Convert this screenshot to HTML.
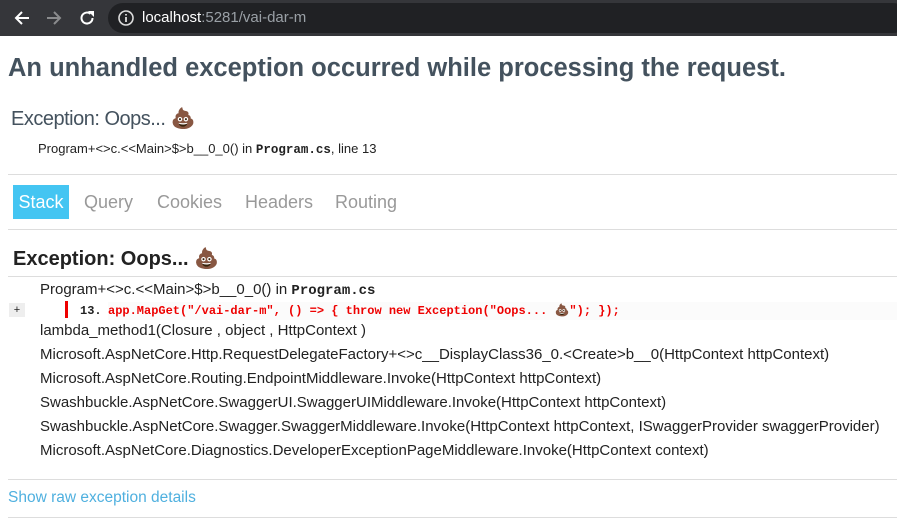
<!DOCTYPE html>
<html><head><meta charset="utf-8"><style>
*{box-sizing:border-box;margin:0;padding:0}
body{width:897px;height:525px;overflow:hidden;background:#fff;font-family:"Segoe UI","Liberation Sans","Noto Sans CJK JP",sans-serif;color:#222}
.bar{height:36px;background:#35363a;position:relative}
.url{position:absolute;left:108px;top:3px;width:800px;height:30px;border-radius:15px;background:#202124;color:#9aa0a6;font-size:15px;line-height:30px;padding-left:34px}
.url b{color:#fff;font-weight:normal}
.bar svg{position:absolute}
.abs{position:absolute;white-space:nowrap}
h1{position:absolute;left:8px;top:54px;font-size:25.5px;font-weight:bold;color:#44525e;white-space:nowrap}
.exc{left:11px;top:106px;font-size:20px;color:#44525e;letter-spacing:-0.5px}
.loc{left:38px;top:141px;font-size:13px;color:#222}
code,.mono{font-family:"Liberation Mono","DejaVu Sans Mono",monospace}
.hr{position:absolute;left:8px;right:0;height:1px;background:#ddd}
.tab{position:absolute;top:185px;height:34px;line-height:34px;font-size:18px;color:#999}
.h2{left:13px;top:246px;font-size:20px;font-weight:bold;color:#222}
.fr{left:40px;font-size:15px;color:#222}
.plus{position:absolute;left:9px;top:303px;width:16px;height:14px;background:#eee;font-size:11px;line-height:14px;text-align:center;color:#222}
.code{position:absolute;left:108px;top:302px;width:789px;height:18px;background:#fbfbfb;font-size:12px;font-weight:bold;color:#e00;line-height:18px;padding-left:0}
.redbar{position:absolute;left:65px;top:301px;width:3px;height:17px;background:#e00}
.ln{left:80px;top:302px;font-size:12px;font-weight:bold;line-height:18px;color:#222}
.raw{left:8px;top:489px;font-size:15.5px;color:#4fb0df}
</style></head><body>
<div class="bar">
<svg style="left:13px;top:9px" width="18" height="18" viewBox="0 0 18 18"><path d="M16 9H3M9 3L3 9l6 6" stroke="#fff" stroke-width="2" fill="none"/></svg>
<svg style="left:45px;top:9px" width="18" height="18" viewBox="0 0 18 18"><path d="M2 9h13M9 3l6 6-6 6" stroke="#8a8b8d" stroke-width="2" fill="none"/></svg>
<svg style="left:78px;top:9px" width="18" height="18" viewBox="0 0 18 18"><path d="M14.5 9A5.5 5.5 0 1 1 12.5 4.8" stroke="#fff" stroke-width="2" fill="none"/><path d="M10 2h6v6z" fill="#fff"/></svg>
<div class="url"><b>localhost</b>:5281/vai-dar-m</div>
<svg style="left:117px;top:9px" width="18" height="18" viewBox="0 0 18 18"><circle cx="9" cy="9" r="7" stroke="#ddd" stroke-width="1.6" fill="none"/><path d="M9 8v5M9 5v1.5" stroke="#ddd" stroke-width="1.8"/></svg>
</div>
<h1>An unhandled exception occurred while processing the request.</h1>
<div class="abs exc">Exception: Oops... 💩</div>
<div class="abs loc">Program+&lt;&gt;c.&lt;&lt;Main&gt;$&gt;b__0_0() in <code style="font-weight:bold;font-size:12.5px">Program.cs</code>, line 13</div>
<div class="hr" style="top:174px"></div>
<div class="tab" style="left:13px;width:56px;background:#44c5f2;color:#fff;text-align:center">Stack</div>
<div class="tab" style="left:84px">Query</div>
<div class="tab" style="left:157px">Cookies</div>
<div class="tab" style="left:245px">Headers</div>
<div class="tab" style="left:335px">Routing</div>
<div class="hr" style="top:229px"></div>
<div class="abs h2">Exception: Oops... 💩</div>
<div class="hr" style="top:276px"></div>
<div class="abs fr" style="top:281px">Program+&lt;&gt;c.&lt;&lt;Main&gt;$&gt;b__0_0() in <code style="font-weight:bold;font-size:14px">Program.cs</code></div>
<div class="plus">+</div>
<div class="redbar"></div>
<div class="code mono">app.MapGet("/vai-dar-m", () =&gt; { throw new Exception("Oops... 💩"); });</div>
<div class="abs ln mono">13.</div>
<div class="abs fr" style="top:322px">lambda_method1(Closure , object , HttpContext )</div>
<div class="abs fr" style="top:346px">Microsoft.AspNetCore.Http.RequestDelegateFactory+&lt;&gt;c__DisplayClass36_0.&lt;Create&gt;b__0(HttpContext httpContext)</div>
<div class="abs fr" style="top:370px">Microsoft.AspNetCore.Routing.EndpointMiddleware.Invoke(HttpContext httpContext)</div>
<div class="abs fr" style="top:394px">Swashbuckle.AspNetCore.SwaggerUI.SwaggerUIMiddleware.Invoke(HttpContext httpContext)</div>
<div class="abs fr" style="top:418px">Swashbuckle.AspNetCore.Swagger.SwaggerMiddleware.Invoke(HttpContext httpContext, ISwaggerProvider swaggerProvider)</div>
<div class="abs fr" style="top:442px">Microsoft.AspNetCore.Diagnostics.DeveloperExceptionPageMiddleware.Invoke(HttpContext context)</div>
<div class="hr" style="top:479px"></div>
<div class="abs raw">Show raw exception details</div>
<div class="hr" style="top:517px"></div>
</body></html>
